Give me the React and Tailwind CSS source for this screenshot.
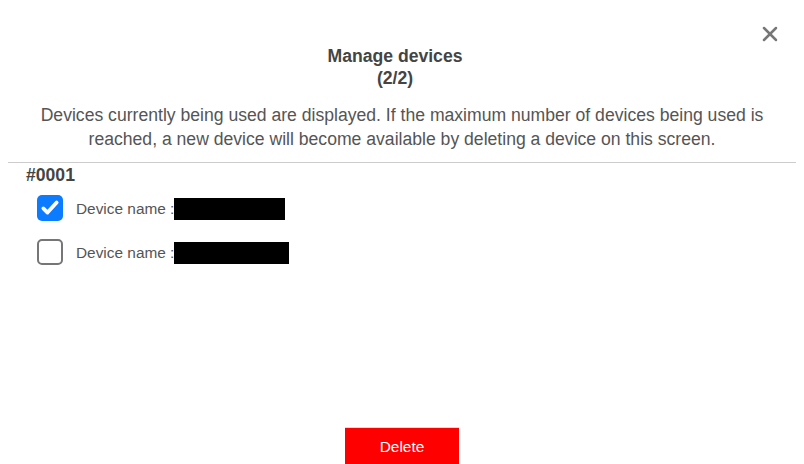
import { X } from "lucide-react";

function DeviceRow({ checked, barWidth }) {
    return (
        <div className="flex items-center h-[26px]">
            {checked ? (
                <div className="w-[26px] h-[26px] rounded-[5px] bg-[#0b7bff] flex items-center justify-center">
                    <svg width="20" height="20" viewBox="0 0 24 24" fill="none" stroke="white" strokeWidth="4.5" strokeLinecap="round" strokeLinejoin="round">
                        <path d="M4 12.5l5 5L20 5.5" />
                    </svg>
                </div>
            ) : (
                <div className="w-[26px] h-[26px] rounded-[5px] border-2 border-[#767676] bg-white"></div>
            )}
            <span className="ml-[13px] text-[15.4px] text-[#555] mt-[2px]">Device name :</span>
            <span className="h-[22px] bg-black mt-[1px]" style={{ width: barWidth }}></span>
        </div>
    );
}

export default function App() {
    return (
        <div className="relative w-[804px] h-[464px] bg-white overflow-hidden font-['Liberation_Sans',Arial,sans-serif]">
            <button className="absolute top-[22px] right-[22px] text-[#777]">
                <X size={24} strokeWidth={2.5} />
            </button>

            <div className="pt-[45px] text-center">
                <h1 className="pr-[14px] text-[17.6px] leading-[22px] font-bold text-[#444]">
                    Manage devices
                    <br />
                    (2/2)
                </h1>
                <p className="mt-[14px] text-[17.6px] leading-[24px] text-[#555]">
                    Devices currently being used are displayed. If the maximum number of devices being used is
                    <br />
                    reached, a new device will become available by deleting a device on this screen.
                </p>
            </div>

            <div className="mx-2 mt-[11px] border-t border-[#ccc]"></div>

            <div className="pl-[26px] pt-[2px]">
                <div className="text-[17.6px] leading-[20px] font-bold text-[#444]">#0001</div>
                <div className="pl-[11px] mt-[10px] flex flex-col gap-[18px]">
                    <DeviceRow checked barWidth={111} />
                    <DeviceRow barWidth={115} />
                </div>
            </div>

            <div className="flex justify-center mt-[162px]">
                <button className="w-[114px] h-[38px] bg-[#ff0000] border-t border-[#ddd] text-white text-[15.4px]">
                    Delete
                </button>
            </div>
        </div>
    );
}
